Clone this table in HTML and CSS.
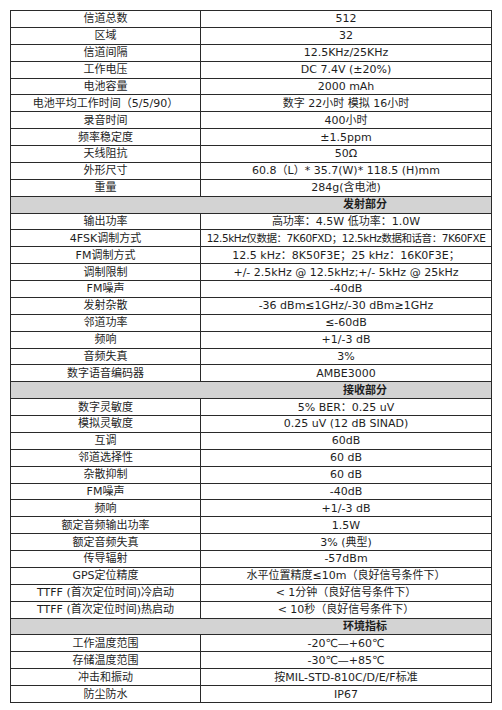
FILE: index.html
```html
<!DOCTYPE html>
<html lang="zh">
<head>
<meta charset="utf-8">
<link rel="stylesheet" href="styles.css">
</head>
<body>
<table class="spec">
<colgroup><col class="c1"><col class="c2"></colgroup>
<tbody>
<tr><td>信道总数</td><td>512</td></tr>
<tr><td>区域</td><td>32</td></tr>
<tr><td>信道间隔</td><td>12.5KHz/25KHz</td></tr>
<tr><td>工作电压</td><td>DC 7.4V (±20%)</td></tr>
<tr><td>电池容量</td><td>2000 mAh</td></tr>
<tr><td>电池平均工作时间（5/5/90）</td><td>数字 22小时 模拟 16小时</td></tr>
<tr><td>录音时间</td><td>400小时</td></tr>
<tr><td>频率稳定度</td><td>±1.5ppm</td></tr>
<tr><td>天线阻抗</td><td>50Ω</td></tr>
<tr><td>外形尺寸</td><td>60.8（L）* 35.7(W)* 118.5 (H)mm</td></tr>
<tr><td>重量</td><td>284g(含电池)</td></tr>
<tr class="section"><td colspan="2"><span>发射部分</span></td></tr>
<tr><td>输出功率</td><td>高功率：4.5W 低功率：1.0W</td></tr>
<tr><td>4FSK调制方式</td><td class="tight">12.5kHz仅数据：7K60FXD；12.5kHz数据和话音：7K60FXE</td></tr>
<tr><td>FM调制方式</td><td>12.5 kHz：8K50F3E；25 kHz：16K0F3E；</td></tr>
<tr><td>调制限制</td><td>+/- 2.5kHz @ 12.5kHz;+/- 5kHz @ 25kHz</td></tr>
<tr><td>FM噪声</td><td>-40dB</td></tr>
<tr><td>发射杂散</td><td>-36 dBm≤1GHz/-30 dBm≥1GHz</td></tr>
<tr><td>邻道功率</td><td>≤-60dB</td></tr>
<tr><td>频响</td><td>+1/-3 dB</td></tr>
<tr><td>音频失真</td><td>3%</td></tr>
<tr><td>数字语音编码器</td><td>AMBE3000</td></tr>
<tr class="section"><td colspan="2"><span>接收部分</span></td></tr>
<tr><td>数字灵敏度</td><td>5% BER：0.25 uV</td></tr>
<tr><td>模拟灵敏度</td><td>0.25 uV (12 dB SINAD)</td></tr>
<tr><td>互调</td><td>60dB</td></tr>
<tr><td>邻道选择性</td><td>60 dB</td></tr>
<tr><td>杂散抑制</td><td>60 dB</td></tr>
<tr><td>FM噪声</td><td>-40dB</td></tr>
<tr><td>频响</td><td>+1/-3 dB</td></tr>
<tr><td>额定音频输出功率</td><td>1.5W</td></tr>
<tr><td>额定音频失真</td><td>3% (典型)</td></tr>
<tr><td>传导辐射</td><td>-57dBm</td></tr>
<tr><td>GPS定位精度</td><td>水平位置精度≤10m（良好信号条件下）</td></tr>
<tr><td>TTFF (首次定位时间)冷启动</td><td>&lt; 1分钟（良好信号条件下）</td></tr>
<tr><td>TTFF (首次定位时间)热启动</td><td>&lt; 10秒（良好信号条件下）</td></tr>
<tr class="section"><td colspan="2"><span>环境指标</span></td></tr>
<tr><td>工作温度范围</td><td>-20℃—+60℃</td></tr>
<tr><td>存储温度范围</td><td>-30℃—+85℃</td></tr>
<tr><td>冲击和振动</td><td>按MIL-STD-810C/D/E/F标准</td></tr>
<tr><td>防尘防水</td><td>IP67</td></tr>
</tbody>
</table>
</body>
</html>
```
FILE: styles.css
```css
html, body {
  margin: 0;
  padding: 0;
  background: #ffffff;
}
body {
  padding: 10px 0 0 10px;
  font-family: "DejaVu Sans", "Noto Sans CJK SC", sans-serif;
  font-size: 11px;
  color: #1e1e1e;
}
.spec {
  border-collapse: collapse;
  width: 481px;
  height: 693px;
  table-layout: fixed;
}
.spec .c1 { width: 190px; }
.spec .c2 { width: 291px; }
.spec td {
  border: 1px solid #2a2a2a;
  text-align: center;
  vertical-align: middle;
  padding: 0;
  height: 15px;
  line-height: 15px;
  white-space: nowrap;
  overflow: hidden;
}
.spec td.tight {
  font-size: 10.5px;
  letter-spacing: -0.45px;
}
.spec .section td {
  background: #d3d3d3;
  text-align: left;
  padding-left: 332px;
  font-weight: bold;
}
```
